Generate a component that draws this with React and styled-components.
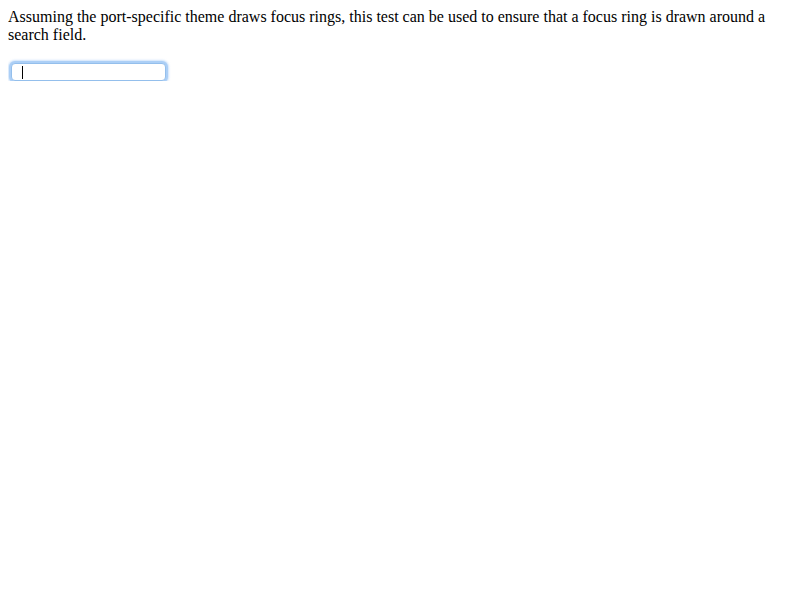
import styled, { createGlobalStyle } from "styled-components";

const GlobalStyle = createGlobalStyle`
  body {
    margin: 8px;
    background: #fff;
    font-family: "Liberation Serif", "Times New Roman", serif;
    font-size: 16px;
    color: #000;
  }
`;

const Field = styled.p`
  margin: 0;
  padding-top: 19px;
`;

const SearchBox = styled.span`
  position: relative;
  display: block;
  margin-left: 3px;
  width: 153px;
  height: 16px;
  border: 1px solid #94bfec;
  border-radius: 4px;
  box-shadow: 0 0 0 2px #accff6, 0 0 2px 3px rgba(172, 207, 246, 0.6);
  background: #fff;
`;

const SearchInput = styled.input`
  box-sizing: border-box;
  width: 100%;
  height: 100%;
  border: none;
  outline: none;
  background: transparent;
  padding: 0 0 0 10px;
  font: 13px "Liberation Sans", Arial, sans-serif;
  caret-color: transparent;
`;

// caret drawn over the field so the photo always shows it
const Caret = styled.span`
  position: absolute;
  left: 10px;
  top: 2px;
  width: 1px;
  height: 13px;
  background: #000;
`;

export default function App() {
  return (
    <>
      <GlobalStyle />
      Assuming the port-specific theme draws focus rings, this test can be used
      to ensure that a focus ring is drawn around a search field.
      <Field>
        <SearchBox>
          <SearchInput type="search" />
          <Caret />
        </SearchBox>
      </Field>
    </>
  );
}
